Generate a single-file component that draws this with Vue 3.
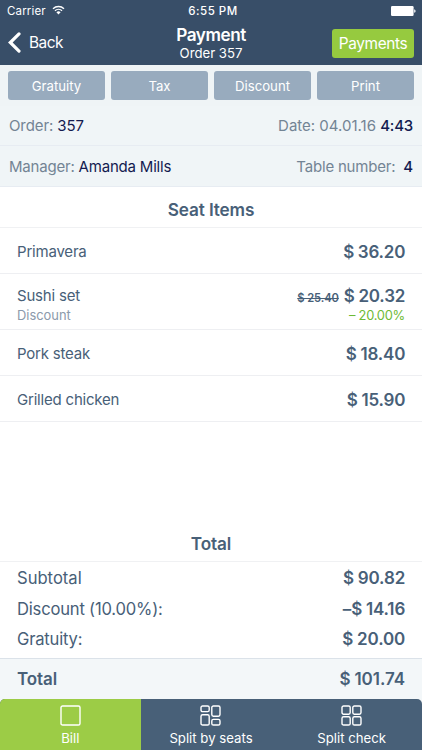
<script setup>
const actions = ['Gratuity', 'Tax', 'Discount', 'Print']
const items = [
  { name: 'Primavera', price: '36.20' },
  { name: 'Sushi set', price: '20.32', old: '25.40', off: '20.00%' },
  { name: 'Pork steak', price: '18.40' },
  { name: 'Grilled chicken', price: '15.90' }
]
const sums = [
  { name: 'Subtotal', sign: '$', value: '90.82' },
  { name: 'Discount (10.00%):', sign: '–$', value: '14.16' },
  { name: 'Gratuity:', sign: '$', value: '20.00' }
]
const tabs = [
  { name: 'Bill', active: true, boxes: [[1, 1, 19, 19]] },
  { name: 'Split by seats', boxes: [[1, 1, 8.2, 5.6], [1, 9.8, 8.2, 10.2], [11.8, 1, 8.2, 10.2], [11.8, 14.4, 8.2, 5.6]] },
  { name: 'Split check', boxes: [[1, 1, 8.2, 8.2], [1, 11.8, 8.2, 8.2], [11.8, 1, 8.2, 8.2], [11.8, 11.8, 8.2, 8.2]] }
]
</script>

<template>
  <div class="screen">
    <header class="top">
      <div class="status">
        <div class="carrier">
          <span>Carrier</span>
          <svg width="13" height="10" viewBox="0 0 13 10">
            <path d="M1 3.7A8 8 0 0 1 12 3.7M3 5.8A5 5 0 0 1 10 5.8" fill="none" stroke="#fff" stroke-width="1.4" />
            <path d="M4.4 7.2A3.1 3.1 0 0 1 8.6 7.2L6.5 9.4Z" fill="#fff" />
          </svg>
        </div>
        <span class="clock">6:55 PM</span>
        <div class="battery">
          <svg width="25" height="10" viewBox="0 0 25 10">
            <rect width="22.6" height="10" rx="1.2" fill="#fff" />
            <path d="M23.2 3.2Q24.6 3.6 24.6 5T23.2 6.8Z" fill="#fff" />
          </svg>
        </div>
      </div>
      <nav class="nav">
        <button class="back">
          <svg width="13" height="21" viewBox="0 0 13 21">
            <path d="M11 1.9L2.3 10.5L11 19.1" fill="none" stroke="#fff" stroke-width="3.2" stroke-linecap="round" stroke-linejoin="miter" />
          </svg>
          <span>Back</span>
        </button>
        <div class="titles">
          <h1>Payment</h1>
          <p>Order 357</p>
        </div>
        <div class="right"><button class="payments">Payments</button></div>
      </nav>
    </header>

    <div class="actions">
      <button v-for="a in actions" :key="a">{{ a }}</button>
    </div>

    <div class="info first">
      <span>Order: <b>357</b></span>
      <span class="date">Date: 04.01.16 <b>4:43</b></span>
    </div>
    <div class="info">
      <span class="manager">Manager: <b>Amanda Mills</b></span>
      <span class="table">Table number: <b>4</b></span>
    </div>

    <h2 class="heading">Seat Items</h2>
    <div v-for="i in items" :key="i.name" class="item" :class="{ reduced: i.old }">
      <div class="line">
        <span>{{ i.name }}</span>
        <span class="amounts">
          <s v-if="i.old">$ {{ i.old }}</s>
          <span class="price"><i>$</i>{{ i.price }}</span>
        </span>
      </div>
      <div v-if="i.old" class="sub">
        <span>Discount</span>
        <span class="off">– {{ i.off }}</span>
      </div>
    </div>

    <h2 class="heading total-heading">Total</h2>
    <div class="sums">
      <div v-for="s in sums" :key="s.name" class="sum">
        <span>{{ s.name }}</span>
        <span class="price"><i>{{ s.sign }}</i>{{ s.value }}</span>
      </div>
    </div>
    <div class="grand">
      <span>Total</span>
      <span class="price"><i>$</i>101.74</span>
    </div>

    <div class="tabwrap">
      <div class="tabs">
        <button v-for="t in tabs" :key="t.name" :class="{ active: t.active }">
          <svg width="21" height="21" viewBox="0 0 21 21">
            <rect v-for="(b, n) in t.boxes" :key="n" :x="b[0]" :y="b[1]" :width="b[2]" :height="b[3]" rx="1.6" fill="none" stroke="#fff" stroke-width="1.4" />
          </svg>
          <span>{{ t.name }}</span>
        </button>
      </div>
    </div>
  </div>
</template>

<style>
body { margin: 0; background: #fff; }
</style>

<style scoped>
* { box-sizing: border-box; }
.screen { width: 422px; height: 750px; display: flex; flex-direction: column; overflow: hidden; background: #fff; color: #486078; font-family: Inter, "Liberation Sans", sans-serif; font-size: 16px; white-space: nowrap; }
button { border: 0; padding: 0; margin: 0; font: inherit; color: #fff; background: none; }
h1, h2, p { margin: 0; }
.top { flex: none; height: 65px; background: #384e68; color: #fff; }
.status { height: 22px; display: grid; grid-template-columns: 1fr auto 1fr; align-items: center; padding: 0 6px 0 7px; font-size: 11.5px; }
.carrier { display: flex; align-items: center; gap: 6px; letter-spacing: .15px; }
.carrier svg { margin-top: -2px; }
.clock { font-weight: 500; letter-spacing: .5px; padding-left: 3px; }
.battery { display: flex; justify-content: flex-end; }
.nav { height: 43px; display: grid; grid-template-columns: 1fr auto 1fr; padding: 0 8px; }
.back { display: flex; align-items: center; gap: 8px; font-size: 15.4px; letter-spacing: -.5px; padding-bottom: 2px; }
.titles { text-align: center; padding-top: 2px; }
h1 { font-size: 17.2px; line-height: 21px; font-weight: 600; letter-spacing: -.45px; }
.titles p { font-size: 13.2px; line-height: 16px; }
.right { display: flex; justify-content: flex-end; padding-top: 7px; }
.payments { width: 82px; height: 29px; border-radius: 3px; background: #96ca3f; font-size: 15.4px; letter-spacing: -.4px; }
.actions { flex: none; height: 41px; display: grid; grid-template-columns: repeat(4, 1fr); gap: 6px; padding: 6px 8px 6px; background: #eff4f6; }
.actions button { height: 29px; border-radius: 3px; background: #98abbe; font-size: 13.2px; }
.info { flex: none; height: 41px; display: flex; justify-content: space-between; align-items: center; padding: 1px 9px 0; background: #f0f5f7; border-bottom: 1px solid #e7ecf2; font-size: 15px; letter-spacing: -.1px; color: #738494; }
.info.first { height: 40px; padding-top: 0; }
.info b { color: #131b50; font-weight: 400; }
.info .manager { letter-spacing: -.2px; }
.info .table { letter-spacing: -.2px; }
.info .table b { margin-left: 4px; font-weight: 500; }
.info .date { letter-spacing: 0; }
.info .date b { font-weight: 500; letter-spacing: -.2px; }
.heading { flex: none; height: 41px; text-align: center; font-size: 17.2px; letter-spacing: -.13px; font-weight: 600; line-height: 46px; border-bottom: 1px solid #f0f1f3; }
.item { flex: none; height: 46px; padding: 2px 17px 0; display: flex; flex-direction: column; justify-content: center; border-bottom: 1px solid #eeeff2; font-size: 15px; letter-spacing: -.2px; }
.item.reduced { height: 56px; justify-content: flex-start; padding-top: 10px; }
.line, .sub { display: flex; justify-content: space-between; align-items: center; line-height: 24px; }
.sub { font-size: 12.9px; letter-spacing: 0; line-height: 18px; color: #8c9aab; }
.off { color: #6dba36; letter-spacing: -.25px; }
.amounts { display: flex; align-items: center; gap: 5px; }
s { font-size: 11.2px; font-weight: 600; letter-spacing: -.1px; padding-top: 4px; }
.price { font-weight: 600; font-size: 17px; letter-spacing: -.2px; margin-right: -.2px; }
.price i { font-style: normal; margin-right: 3.8px; }
.item.reduced .line { height: 23px; }
.total-heading { margin-top: auto; }
.sums { flex: none; height: 97px; padding-top: 1px; border-bottom: 1px solid #dbe2e9; }
.sum { height: 30.6px; padding: 0 17px; display: flex; justify-content: space-between; align-items: center; font-size: 16.6px; letter-spacing: -.2px; }
.sum:first-child { letter-spacing: 0; }
.sum .price { letter-spacing: -.12px; }
.grand { flex: none; height: 40px; padding: 0 17px; display: flex; justify-content: space-between; align-items: center; background: #f3f7f9; font-size: 17px; font-weight: 600; letter-spacing: -.1px; }
.grand .price { letter-spacing: 0; }
.tabwrap { flex: none; height: 51px; background: #f3f7f9; }
.tabs { height: 51px; display: grid; grid-template-columns: repeat(3, 1fr); background: #486078; border-radius: 5px 5px 0 0; overflow: hidden; }
.tabs button { display: flex; flex-direction: column; align-items: center; padding-top: 6px; font-size: 13.2px; gap: 3px; line-height: 18px; }
.tabs svg { flex: none; }
.tabs .active { background: #9ccc46; }
</style>
